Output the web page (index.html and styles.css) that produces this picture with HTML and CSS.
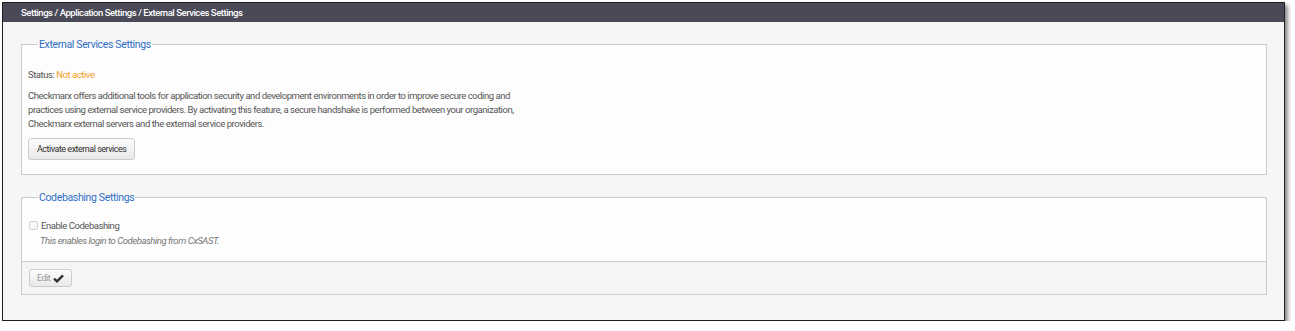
FILE: index.html
```html
<!DOCTYPE html>
<html lang="en">
<head>
    <meta charset="UTF-8">
    <title>External Services Settings</title>
    <link rel="stylesheet" href="styles.css">
</head>
<body>

<div class="window">
    <div class="pathbar">Settings / Application Settings / External Services Settings</div>

    <div class="content">
        <fieldset class="group">
            <legend>External Services Settings</legend>
            <div class="group-body">
                <p class="status">Status: <span class="not-active">Not active</span></p>
                <p class="about">Checkmarx offers additional tools for application security and development environments in order to improve secure coding and<br>
                practices using external service providers. By activating this feature, a secure handshake is performed between your organization,<br>
                Checkmarx external servers and the external service providers.</p>
                <button class="btn">Activate external services</button>
            </div>
        </fieldset>

        <fieldset class="group">
            <legend>Codebashing Settings</legend>
            <div class="group-body cb-body">
                <label class="check"><input type="checkbox" disabled> Enable Codebashing</label>
                <div class="hint">This enables login to Codebashing from CxSAST.</div>
            </div>
            <div class="group-footer">
                <button class="btn btn-edit" disabled>Edit
                    <svg width="11" height="9" viewBox="0 0 11 9"><path d="M1 4.6 L4 7.4 L10 1.4" fill="none" stroke="#333" stroke-width="2.4"/></svg>
                </button>
            </div>
        </fieldset>
    </div>
</div>

</body>
</html>
```

FILE: styles.css
```css
body {
    margin: 0;
    padding: 2px 10px 0 2px;
    background-color: #fff;
    font-family: Roboto, 'Liberation Sans', sans-serif;
    font-size: 9.5px;
    letter-spacing: -0.45px;
    color: #555;
}

.window {
    height: 317px;
    border: 1px solid #1e1e1e;
    background-color: #f6f6f6;
    box-shadow: 3px 3px 4px rgba(0, 0, 0, 0.45);
    display: flex;
    flex-direction: column;
}

.pathbar {
    background-color: #4a4957;
    color: #fff;
    height: 19px;
    line-height: 19px;
    padding-left: 18px;
    font-weight: 500;
}

.content {
    padding: 16px 17px 0 18px;
    display: flex;
    flex-direction: column;
    gap: 16px;
}

.group {
    margin: 0;
    padding: 0;
    border: 1px solid #ccc;
    background-color: #fdfdfd;
    min-width: 0;
}

.group legend {
    margin-left: 16px;
    padding: 0 1px;
    color: #2f6ec4;
    font-size: 10.5px;
    letter-spacing: -0.35px;
}

.group-body {
    padding: 17px 6px 14px 6px;
}

.group p {
    margin: 0;
}

.status {
    line-height: 14px;
    margin-bottom: 7px !important;
}

.not-active {
    color: #f7a12a;
}

.about {
    line-height: 14px;
    margin-bottom: 7px !important;
}

.btn {
    font-family: inherit;
    font-size: 9px;
    letter-spacing: -0.5px;
    color: #333;
    height: 22px;
    padding: 0 8px;
    border: 1px solid #ccc;
    border-radius: 3px;
    background: linear-gradient(#fcfcfc, #e8e8e8);
}

.cb-body {
    padding: 16px 6px 15px 7px;
}

.check {
    display: flex;
    align-items: center;
    gap: 3px;
}

.check input {
    margin: 0;
    width: 9px;
    height: 9px;
}

.hint {
    font-style: italic;
    color: #777;
    margin-top: 4px;
    padding-left: 11px;
}

.group-footer {
    border-top: 1px solid #ccc;
    background-color: #f5f5f5;
    padding: 7px 6px 7px 7px;
}

.btn-edit {
    height: 18px;
    padding: 0 7px;
    color: #999;
    display: inline-flex;
    align-items: center;
    gap: 3px;
}
```
